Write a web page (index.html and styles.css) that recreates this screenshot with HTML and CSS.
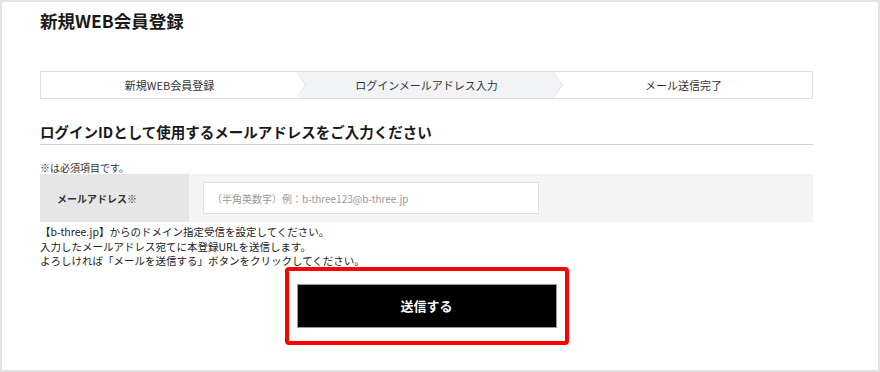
FILE: index.html
```html
<!DOCTYPE html>
<html lang="ja">
<head>
    <meta charset="UTF-8">
    <meta name="viewport" content="width=device-width, initial-scale=1.0">
    <title>新規WEB会員登録</title>
    <link rel="stylesheet" href="styles.css">
</head>
<body>

<div class="page">
    <h1 class="page-title">新規WEB会員登録</h1>

    <ol class="steps">
        <li class="step">新規WEB会員登録</li>
        <li class="step step-current">ログインメールアドレス入力</li>
        <li class="step step-last">メール送信完了</li>
    </ol>

    <h2 class="section-title">ログインIDとして使用するメールアドレスをご入力ください</h2>

    <p class="required-note">※は必須項目です。</p>

    <div class="form-row">
        <label class="form-label" for="email">メールアドレス※</label>
        <div class="form-field">
            <input type="text" id="email" class="form-input" placeholder="（半角英数字）例：b-three123@b-three.jp">
        </div>
    </div>

    <p class="notes">
        【b-three.jp】からのドメイン指定受信を設定してください。<br>
        入力したメールアドレス宛てに本登録URLを送信します。<br>
        よろしければ「メールを送信する」ボタンをクリックしてください。
    </p>

    <div class="submit-area">
        <div class="highlight">
            <button class="submit-button">送信する</button>
        </div>
    </div>
</div>

</body>
</html>
```

FILE: styles.css
```css
body {
    margin: 0;
    padding: 0;
    background: #ffffff;
    color: #333333;
    font-family: "Noto Sans CJK JP", "Noto Sans", sans-serif;
}
.page {
    box-sizing: border-box;
    width: 880px;
    height: 372px;
    border: 2px solid #e3e3e3;
    padding: 0 65px 0 38px;
    overflow: hidden;
}
.page-title {
    margin: 7px 0 0;
    font-size: 17.5px;
    line-height: 24px;
    font-weight: 700;
    color: #1a1a1a;
}
.steps {
    display: flex;
    list-style: none;
    margin: 38px 0 0;
    padding: 0;
    height: 28px;
    box-sizing: border-box;
    border: 1px solid #dedede;
}
.step {
    position: relative;
    flex: 1;
    display: flex;
    align-items: center;
    justify-content: center;
    font-size: 11px;
    color: #333333;
    background: #ffffff;
}
.step-current {
    background: #f2f3f5;
}
.step::before,
.step::after {
    content: "";
    position: absolute;
    top: 0;
    bottom: 0;
    clip-path: polygon(0 0, 100% 50%, 0 100%);
    z-index: 1;
}
.step::before {
    right: -8px;
    width: 10px;
    background: #d9d9d9;
}
.step::after {
    right: -7px;
    width: 9px;
    background: #ffffff;
}
.step-current::after {
    background: #f2f3f5;
}
.step-last::before,
.step-last::after {
    display: none;
}
.section-title {
    margin: 23px 0 0;
    padding-bottom: 2px;
    font-size: 14.5px;
    line-height: 20px;
    font-weight: 700;
    color: #1a1a1a;
    border-bottom: 1px solid #cfcfcf;
}
.required-note {
    margin: 17px 0 0;
    font-size: 10px;
    line-height: 12px;
    color: #333333;
}
.form-row {
    display: flex;
    height: 48px;
}
.form-label {
    width: 149px;
    display: flex;
    align-items: center;
    padding-left: 17px;
    box-sizing: border-box;
    background: #e6e6e6;
    font-size: 10px;
    font-weight: 700;
    color: #333333;
}
.form-field {
    flex: 1;
    display: flex;
    align-items: center;
    padding-left: 14px;
    background: #f4f4f4;
}
.form-input {
    width: 336px;
    height: 32px;
    box-sizing: border-box;
    border: 1px solid #e0e0e0;
    background: #ffffff;
    padding: 0 8px;
    font-family: inherit;
    font-size: 10px;
    color: #333333;
    outline: none;
}
.form-input::placeholder {
    color: #999999;
}
.notes {
    margin: 3px 0 0;
    font-size: 10.5px;
    line-height: 14.5px;
    color: #222222;
}
.submit-area {
    display: flex;
    justify-content: center;
    margin-top: -2px;
}
.highlight {
    border: 4px solid #ff0000;
    border-radius: 4px;
    padding: 13px 8px;
}
.submit-button {
    display: block;
    width: 260px;
    height: 44px;
    border: 1px solid #9a9a9a;
    background: #000000;
    color: #ffffff;
    font-family: inherit;
    font-size: 13px;
    font-weight: 700;
    cursor: pointer;
}
```
